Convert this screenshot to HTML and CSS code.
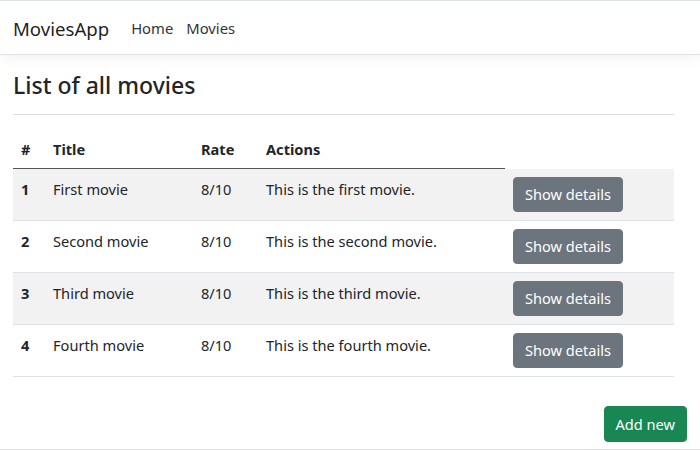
FILE: index.html
```html
<!DOCTYPE html>
<html lang="en">
<head>
<meta charset="utf-8">
<title>MoviesApp</title>
<link rel="stylesheet" href="styles.css">
</head>
<body>
<header class="navbar">
  <a class="brand" href="#">MoviesApp</a>
  <nav class="nav">
    <a class="nav-link" href="#">Home</a>
    <a class="nav-link" href="#">Movies</a>
  </nav>
</header>
<main class="container">
  <h3 class="title">List of all movies</h3>
  <hr class="rule">
  <table class="table">
    <thead>
      <tr>
        <th class="c-num">#</th>
        <th class="c-title">Title</th>
        <th class="c-rate">Rate</th>
        <th class="c-actions">Actions</th>
      </tr>
    </thead>
    <tbody>
      <tr class="odd">
        <th>1</th><td>First movie</td><td>8/10</td><td>This is the first movie.</td>
        <td><button class="btn btn-secondary">Show details</button></td>
      </tr>
      <tr>
        <th>2</th><td>Second movie</td><td>8/10</td><td>This is the second movie.</td>
        <td><button class="btn btn-secondary">Show details</button></td>
      </tr>
      <tr class="odd">
        <th>3</th><td>Third movie</td><td>8/10</td><td>This is the third movie.</td>
        <td><button class="btn btn-secondary">Show details</button></td>
      </tr>
      <tr>
        <th>4</th><td>Fourth movie</td><td>8/10</td><td>This is the fourth movie.</td>
        <td><button class="btn btn-secondary">Show details</button></td>
      </tr>
    </tbody>
  </table>
  <div class="actions">
    <button class="btn btn-success">Add new</button>
  </div>
</main>
<footer class="footer"></footer>
</body>
</html>
```
FILE: styles.css
```css
* { box-sizing: border-box; }
html, body { margin: 0; padding: 0; }
body {
  font-family: "Noto Sans", "Open Sans", sans-serif;
  font-size: 14.6px;
  line-height: 24px;
  color: #212529;
  background: #fff;
  height: 451px;
  overflow: hidden;
}
.navbar {
  display: flex;
  align-items: center;
  height: 55px;
  padding: 0 13px;
  border-top: 1px solid #dee2e6;
  border-bottom: 1px solid #dee2e6;
  box-shadow: 0 4px 12px rgba(0,0,0,.05);
}
.brand {
  font-size: 18.6px;
  color: rgba(0,0,0,.9);
  text-decoration: none;
  margin-right: 22px;
  margin-top: 2px;
}
.nav { display: flex; gap: 13px; }
.nav-link {
  color: #333;
  text-decoration: none;
  font-size: 14.8px;
}
.container { padding: 0 13px; }
.title {
  margin: 14px 0 0;
  font-size: 23px;
  font-weight: 500;
  line-height: 32px;
}
.rule {
  margin: 13px 0 16px;
  width: 661px;
  border: 0;
  border-top: 1px solid #dcdcdc;
}
.table {
  width: 661px;
  border-collapse: collapse;
  margin-bottom: 29px;
}
.table th, .table td {
  text-align: left;
  vertical-align: top;
  padding: 8px;
  border-bottom: 1px solid #dee2e6;
}
.table thead th {
  font-weight: 700;
  padding: 6px 8px 7px;
  border-bottom: 1px solid #555;
}
.table tbody th { font-weight: 700; }
.table tbody tr.odd { background: #f2f2f2; }
.c-num { width: 32px; }
.c-title { width: 148px; }
.c-rate { width: 65px; }
.c-actions { width: 247px; }
.btn {
  font-family: inherit;
  font-size: 14.6px;
  line-height: 23px;
  padding: 5px 11px;
  border: 1px solid transparent;
  border-radius: 4px;
  color: #fff;
  cursor: pointer;
}
.btn-secondary { background: #6c757d; border-color: #6c757d; }
.btn-success { background: #198754; border-color: #198754; line-height: 24px; }
.actions { display: flex; justify-content: flex-end; }
.footer {
  margin-top: 7px;
  border-top: 1px solid #dee2e6;
}
```
